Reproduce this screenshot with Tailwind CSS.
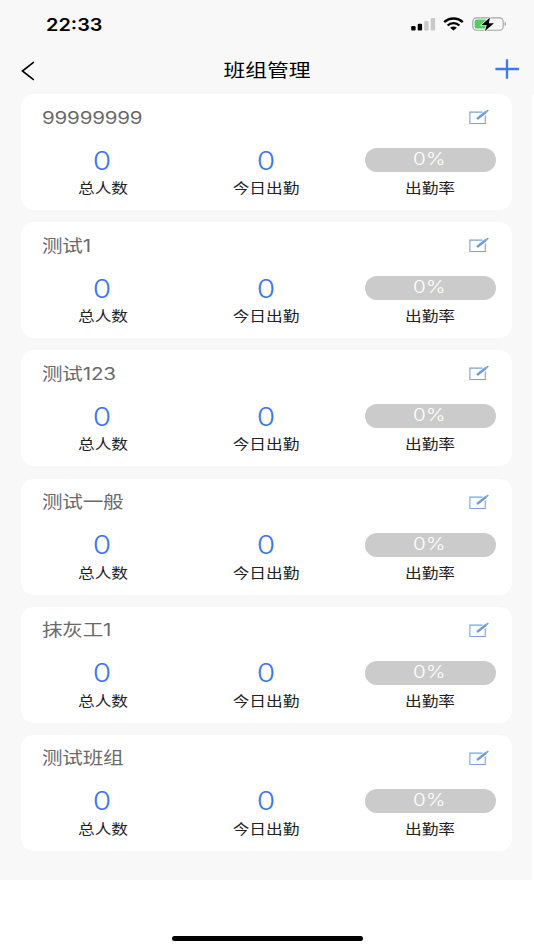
<!DOCTYPE html>
<html lang="zh-CN">
<head>
    <meta charset="UTF-8">
    <meta name="viewport" content="width=device-width, initial-scale=1.0">
    <title>班组管理</title>
    <script src="https://cdn.jsdelivr.net/npm/@tailwindcss/browser@4"></script>
</head>
<body class="bg-white w-[534px] h-[950px] overflow-hidden font-['Inter','Noto_Sans_CJK_SC',sans-serif]">

    <!-- 状态栏 -->
    <div class="h-[48px] bg-[#f8f8f8] flex items-center justify-between pl-[46px] pr-[27px]">
        <span class="inline-block origin-left scale-x-[1.17] pt-[2px] text-[17px] leading-none font-semibold text-black">22:33</span>
        <div class="flex items-center">
            <!-- 信号 -->
            <svg class="w-[25px] h-[14px]" viewBox="0 0 25 14">
                <rect x="0.2" y="9" width="4.4" height="4.4" rx="1.2" fill="#000"/>
                <rect x="6.7" y="6.8" width="4.4" height="6.6" rx="1.2" fill="#000"/>
                <rect x="13.2" y="4" width="4.4" height="9.4" rx="1.2" fill="#c9c9c9"/>
                <rect x="19.7" y="1" width="4.4" height="12.4" rx="1.2" fill="#c9c9c9"/>
            </svg>
            <!-- WiFi -->
            <svg class="ml-[7px] w-[21px] h-[14px]" viewBox="0 0 21 14" fill="none" stroke="#000">
                <path d="M1.2 5.1C6.4 0.2 14.6 0.2 19.8 5.1" stroke-width="2.4"/>
                <path d="M4.6 8.5C7.9 5.4 13.1 5.4 16.4 8.5" stroke-width="2.3"/>
                <path d="M7.1 10.8C9 9.1 12 9.1 13.9 10.8L10.5 13.6Z" fill="#000" stroke="none"/>
            </svg>
            <!-- 电池 -->
            <svg class="ml-[8px] w-[35px] h-[16px]" viewBox="0 0 35 16">
                <rect x="0.8" y="1.9" width="30.4" height="12.4" rx="3.8" fill="none" stroke="#a3a3a3" stroke-width="1.1"/>
                <path d="M32.6 5.8C34.4 6.4 34.4 9.6 32.6 10.2Z" fill="#a3a3a3"/>
                <rect x="2.6" y="3.6" width="12.4" height="9" rx="2.2" fill="#55cc60"/>
                <path d="M18 1.4L9.4 9H14.6L13 15L22 7.2H16.8Z" fill="#000" stroke="#f8f8f8" stroke-width="1.2" paint-order="stroke"/>
            </svg>
        </div>
    </div>

    <!-- 标题栏 -->
    <div class="h-[46px] bg-[#f8f8f8] grid grid-cols-[1fr_auto_1fr] items-center pl-[21px] pr-[14px]">
        <svg class="w-[14px] h-[20px]" viewBox="0 0 14 20" fill="none" stroke="#000" stroke-width="1.6">
            <path d="M12.8 1.2L1.4 10L12.8 18.8"/>
        </svg>
        <h1 class="relative -left-[4px] inline-block scale-x-[1.21] text-[18px] leading-none text-black">班组管理</h1>
        <svg class="relative -top-[2px] justify-self-end w-[26px] h-[22px]" viewBox="0 0 26 22" fill="none" stroke="#3c78f0" stroke-width="2.3">
            <path d="M1.4 11H25M13 1.2V20.8"/>
        </svg>
    </div>

    <!-- 班组列表 -->
    <div class="h-[786px] pr-[2px]">
        <div id="team-list" class="h-full bg-[#f8f8f8] pl-[21px] pr-[20px] flex flex-col gap-[12.2px]"></div>
    </div>

    <!-- Home 指示条 -->
    <div class="h-[70px] flex justify-center items-end pb-[9px]">
        <div class="w-[191px] h-[5px] rounded-full bg-black"></div>
    </div>

    <template id="team-card">
        <section class="h-[116px] shrink-0 bg-white rounded-[13px]">
            <div class="h-[46px] pl-[20.5px] pr-[23.5px] flex items-center justify-between">
                <span data-name class="inline-block origin-left scale-x-[1.21] pt-[2px] text-[17px] leading-none tracking-[-0.01em] text-[#6a6a6a]"></span>
                <svg class="w-[20px] h-[16px]" viewBox="0 0 20 16" fill="none">
                    <path d="M13.4 3.1H0.9V14.5H16.3V6.4" stroke="#78a2e0" stroke-width="1.1"/>
                    <path d="M8 10L17.2 2.8" stroke="#6f9bdc" stroke-width="2.4"/>
                    <path d="M17.4 2.6L19.3 1.1" stroke="#6f9bdc" stroke-width="1.8"/>
                </svg>
            </div>
            <div class="grid grid-cols-3 text-center">
                <div>
                    <div class="h-[39px] pt-[2px] pr-[1px] flex items-center justify-center"><span class="inline-block scale-x-[1.15] text-[26px] leading-none font-light text-[#3c78f0]">0</span></div>
                    <div class="h-[16px] leading-[16px]"><span class="inline-block scale-x-[1.19] text-[14px] leading-[16px] text-[#222]">总人数</span></div>
                </div>
                <div>
                    <div class="h-[39px] pt-[2px] pr-[1px] flex items-center justify-center"><span class="inline-block scale-x-[1.15] text-[26px] leading-none font-light text-[#3c78f0]">0</span></div>
                    <div class="h-[16px] leading-[16px]"><span class="inline-block scale-x-[1.19] text-[14px] leading-[16px] text-[#222]">今日出勤</span></div>
                </div>
                <div>
                    <div class="h-[39px] pt-[1px] flex items-center justify-center">
                        <div class="w-[131px] h-[24px] rounded-full bg-[#cbcbcb] flex items-center justify-center pb-[1px] pr-[2px]"><span class="inline-block scale-x-[1.22] text-[17px] leading-none font-light text-white">0%</span></div>
                    </div>
                    <div class="h-[16px] leading-[16px]"><span class="inline-block scale-x-[1.19] text-[14px] leading-[16px] text-[#222]">出勤率</span></div>
                </div>
            </div>
        </section>
    </template>

    <script>
        const teams = ['99999999', '测试1', '测试123', '测试一般', '抹灰工1', '测试班组'];
        const list = document.getElementById('team-list');
        const tpl = document.getElementById('team-card');

        teams.forEach((name) => {
            const card = tpl.content.cloneNode(true);
            card.querySelector('[data-name]').textContent = name;
            list.appendChild(card);
        });
    </script>
</body>
</html>
